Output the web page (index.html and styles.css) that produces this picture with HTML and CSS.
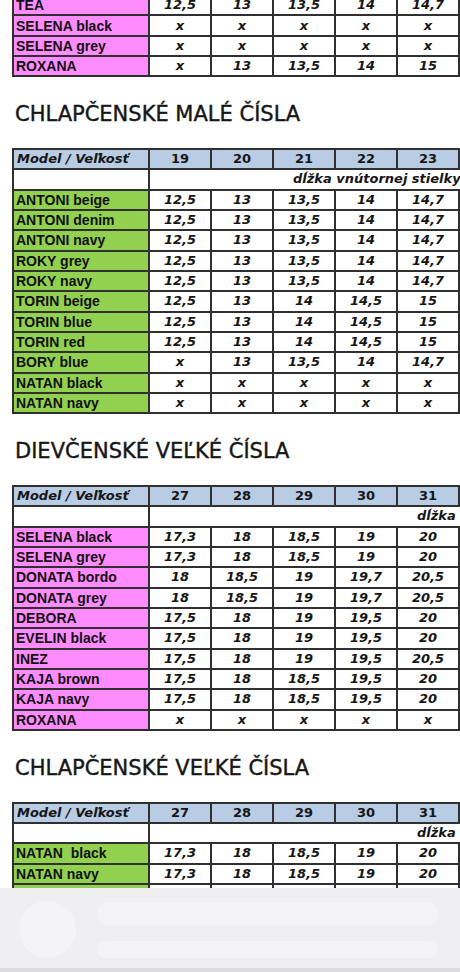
FILE: index.html
```html
<!DOCTYPE html>
<html lang="sk">
<head>
<meta charset="utf-8">
<title>Veľkostné tabuľky</title>
<link rel="stylesheet" href="styles.css">
</head>
<body>
<main class="page">
  <table class="sizes sizes--first">
    <colgroup><col class="c-name"><col class="c-size"><col class="c-size"><col class="c-size"><col class="c-size"><col class="c-size"><col class="c-size"></colgroup>
    <tbody>
      <tr><td class="name girl">TEA</td><td>12,5</td><td>13</td><td>13,5</td><td>14</td><td>14,7</td><td></td></tr>
      <tr><td class="name girl">SELENA black</td><td>x</td><td>x</td><td>x</td><td>x</td><td>x</td><td></td></tr>
      <tr><td class="name girl">SELENA grey</td><td>x</td><td>x</td><td>x</td><td>x</td><td>x</td><td></td></tr>
      <tr><td class="name girl">ROXANA</td><td>x</td><td>13</td><td>13,5</td><td>14</td><td>15</td><td></td></tr>
    </tbody>
  </table>

  <h2 class="section-title">CHLAPČENSKÉ MALÉ ČÍSLA</h2>
  <table class="sizes">
    <colgroup><col class="c-name"><col class="c-size"><col class="c-size"><col class="c-size"><col class="c-size"><col class="c-size"><col class="c-size"></colgroup>
    <tbody>
      <tr class="head"><td class="model">Model / Veľkosť</td><td>19</td><td>20</td><td>21</td><td>22</td><td>23</td><td></td></tr>
      <tr class="sub"><td></td><td class="unit unit--small" colspan="6">dĺžka vnútornej stielky</td></tr>
      <tr><td class="name boy">ANTONI beige</td><td>12,5</td><td>13</td><td>13,5</td><td>14</td><td>14,7</td><td></td></tr>
      <tr><td class="name boy">ANTONI denim</td><td>12,5</td><td>13</td><td>13,5</td><td>14</td><td>14,7</td><td></td></tr>
      <tr><td class="name boy">ANTONI navy</td><td>12,5</td><td>13</td><td>13,5</td><td>14</td><td>14,7</td><td></td></tr>
      <tr><td class="name boy">ROKY grey</td><td>12,5</td><td>13</td><td>13,5</td><td>14</td><td>14,7</td><td></td></tr>
      <tr><td class="name boy">ROKY navy</td><td>12,5</td><td>13</td><td>13,5</td><td>14</td><td>14,7</td><td></td></tr>
      <tr><td class="name boy">TORIN beige</td><td>12,5</td><td>13</td><td>14</td><td>14,5</td><td>15</td><td></td></tr>
      <tr><td class="name boy">TORIN blue</td><td>12,5</td><td>13</td><td>14</td><td>14,5</td><td>15</td><td></td></tr>
      <tr><td class="name boy">TORIN red</td><td>12,5</td><td>13</td><td>14</td><td>14,5</td><td>15</td><td></td></tr>
      <tr><td class="name boy">BORY blue</td><td>x</td><td>13</td><td>13,5</td><td>14</td><td>14,7</td><td></td></tr>
      <tr><td class="name boy">NATAN black</td><td>x</td><td>x</td><td>x</td><td>x</td><td>x</td><td></td></tr>
      <tr><td class="name boy">NATAN navy</td><td>x</td><td>x</td><td>x</td><td>x</td><td>x</td><td></td></tr>
    </tbody>
  </table>

  <h2 class="section-title">DIEVČENSKÉ VEĽKÉ ČÍSLA</h2>
  <table class="sizes">
    <colgroup><col class="c-name"><col class="c-size"><col class="c-size"><col class="c-size"><col class="c-size"><col class="c-size"><col class="c-size"></colgroup>
    <tbody>
      <tr class="head"><td class="model">Model / Veľkosť</td><td>27</td><td>28</td><td>29</td><td>30</td><td>31</td><td></td></tr>
      <tr class="sub"><td></td><td class="unit unit--large" colspan="6">dĺžka vnútornej stielky</td></tr>
      <tr><td class="name girl">SELENA black</td><td>17,3</td><td>18</td><td>18,5</td><td>19</td><td>20</td><td></td></tr>
      <tr><td class="name girl">SELENA grey</td><td>17,3</td><td>18</td><td>18,5</td><td>19</td><td>20</td><td></td></tr>
      <tr><td class="name girl">DONATA bordo</td><td>18</td><td>18,5</td><td>19</td><td>19,7</td><td>20,5</td><td></td></tr>
      <tr><td class="name girl">DONATA grey</td><td>18</td><td>18,5</td><td>19</td><td>19,7</td><td>20,5</td><td></td></tr>
      <tr><td class="name girl">DEBORA</td><td>17,5</td><td>18</td><td>19</td><td>19,5</td><td>20</td><td></td></tr>
      <tr><td class="name girl">EVELIN black</td><td>17,5</td><td>18</td><td>19</td><td>19,5</td><td>20</td><td></td></tr>
      <tr><td class="name girl">INEZ</td><td>17,5</td><td>18</td><td>19</td><td>19,5</td><td>20,5</td><td></td></tr>
      <tr><td class="name girl">KAJA brown</td><td>17,5</td><td>18</td><td>18,5</td><td>19,5</td><td>20</td><td></td></tr>
      <tr><td class="name girl">KAJA navy</td><td>17,5</td><td>18</td><td>18,5</td><td>19,5</td><td>20</td><td></td></tr>
      <tr><td class="name girl">ROXANA</td><td>x</td><td>x</td><td>x</td><td>x</td><td>x</td><td></td></tr>
    </tbody>
  </table>

  <h2 class="section-title">CHLAPČENSKÉ VEĽKÉ ČÍSLA</h2>
  <table class="sizes">
    <colgroup><col class="c-name"><col class="c-size"><col class="c-size"><col class="c-size"><col class="c-size"><col class="c-size"><col class="c-size"></colgroup>
    <tbody>
      <tr class="head"><td class="model">Model / Veľkosť</td><td>27</td><td>28</td><td>29</td><td>30</td><td>31</td><td></td></tr>
      <tr class="sub"><td></td><td class="unit unit--large" colspan="6">dĺžka vnútornej stielky</td></tr>
      <tr><td class="name boy">NATAN&nbsp; black</td><td>17,3</td><td>18</td><td>18,5</td><td>19</td><td>20</td><td></td></tr>
      <tr><td class="name boy">NATAN navy</td><td>17,3</td><td>18</td><td>18,5</td><td>19</td><td>20</td><td></td></tr>
      <tr><td class="name boy">BORY blue</td><td>17,5</td><td>18</td><td>18,5</td><td>19,5</td><td>20,5</td><td></td></tr>
    </tbody>
  </table>
</main>

<div class="loader" aria-hidden="true">
  <div class="loader__avatar"></div>
  <div class="loader__lines">
    <div class="loader__bar loader__bar--wide"></div>
    <div class="loader__bar loader__bar--thin"></div>
  </div>
</div>
</body>
</html>
```

FILE: styles.css
```css
html, body {
  margin: 0;
  padding: 0;
  overflow: hidden;
  background: #ffffff;
}

.page {
  width: 560px;
}

.sizes {
  border-collapse: collapse;
  table-layout: fixed;
  width: 508px;
  margin-left: 12px;
  font-family: "DejaVu Sans", "Liberation Sans", sans-serif;
  color: #161616;
}

.sizes--first {
  margin-top: -6px;
}

.c-name { width: 136px; }
.c-size { width: 62px; }

.sizes td {
  border: 2px solid #303030;
  height: 18.35px;
  padding: 0;
  text-align: center;
  vertical-align: middle;
  font-size: 13px;
  line-height: 16px;
  font-weight: bold;
  font-style: italic;
  white-space: nowrap;
}

.sizes .name {
  text-align: left;
  padding-left: 2px;
  font-family: "Liberation Sans", Arial, sans-serif;
  font-size: 14px;
  font-style: normal;
  font-weight: bold;
  color: #111;
}

.girl { background: #ff8cff; }
.boy { background: #92d050; }

.head td {
  background: #b8cce4;
  font-style: normal;
  height: 17.6px;
}

.sizes .head .model {
  text-align: left;
  padding-left: 3px;
  font-style: italic;
  font-weight: 600;
}

.sub td {
  background: #ffffff;
  height: 18.6px;
}

.sizes .unit {
  text-align: left;
  font-weight: 600;
  font-style: italic;
  overflow: visible;
}

.sizes .unit--small { padding-left: 143px; }
.sizes .unit--large { padding-left: 267px; }

.section-title {
  margin: 25px 0 21px;
  padding-left: 15px;
  font-family: "DejaVu Sans", "Liberation Sans", sans-serif;
  font-size: 21px;
  line-height: 25px;
  font-weight: normal;
  color: #161616;
  -webkit-text-stroke: 0.4px #161616;
  white-space: nowrap;
}

.loader {
  position: fixed;
  left: 0;
  right: 0;
  bottom: 0;
  height: 84px;
  box-sizing: border-box;
  background: #efeff2;
  border-bottom: 4px solid #dcdcdf;
  display: flex;
  align-items: flex-start;
  padding: 13px 0 0 19px;
  gap: 21px;
}

.loader__avatar {
  width: 57px;
  height: 57px;
  border-radius: 50%;
  background: #f4f4f6;
}

.loader__lines {
  width: 341px;
  display: flex;
  flex-direction: column;
  gap: 16px;
  padding-top: 1px;
}

.loader__bar {
  background: #f4f4f6;
}

.loader__bar--wide {
  height: 23px;
  border-radius: 12px;
}

.loader__bar--thin {
  height: 17px;
  border-radius: 9px;
}
```
